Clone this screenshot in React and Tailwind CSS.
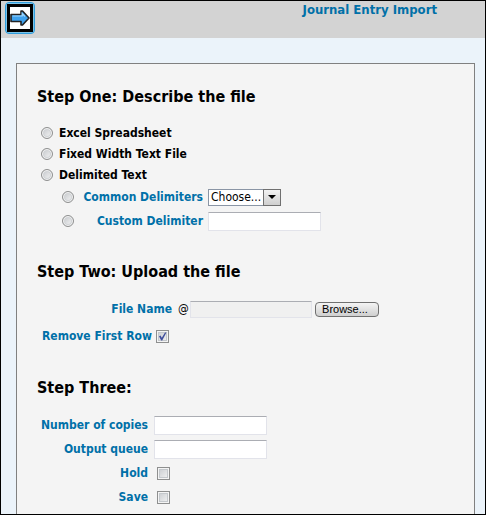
import React, { useState } from "react";

const fileTypes = [
  { value: "excel", label: "Excel Spreadsheet" },
  { value: "fixed", label: "Fixed Width Text File" },
  { value: "delimited", label: "Delimited Text" },
];

const textBox =
  "h-[19px] w-[113px] bg-white border border-[#e2e3ea] border-t-[#abadb3] px-1 text-xs text-black font-normal";

function Radio(props) {
  return (
    <input
      type="radio"
      className="appearance-none shrink-0 w-3 h-3 rounded-full border border-[#8e8f8f] bg-linear-to-br from-[#c2c5c9] to-[#f8f8f8] shadow-[inset_0_0_0_1px_#f4f4f4,inset_0_0_0_2px_#d0d3d6] checked:bg-[radial-gradient(circle,#1f4f8f_30%,#f4f4f4_45%)]"
      {...props}
    />
  );
}

function Checkbox(props) {
  return (
    <span className="relative flex shrink-0 w-[13px] h-[13px]">
      <input
        type="checkbox"
        className="peer appearance-none w-[13px] h-[13px] border border-[#8e8f8f] bg-linear-to-br from-[#c6c9cd] to-[#f6f6f6] shadow-[inset_0_0_0_1px_#f4f4f4,inset_0_0_0_2px_#c4c8cc]"
        {...props}
      />
      <svg
        viewBox="0 0 13 13"
        className="absolute inset-0 w-[13px] h-[13px] pointer-events-none invisible peer-checked:visible"
      >
        <path d="M3 6.2 L4.6 5.6 L5.8 7.8 L9 2.6 L10.4 2.6 L6.2 10.4 L5.2 10.4 Z" fill="#404f9c" />
      </svg>
    </span>
  );
}

function Heading({ children }) {
  return <h2 className="text-base leading-6 font-bold text-black mb-[13px]">{children}</h2>;
}

function Row({ id, label, children }) {
  return (
    <div className="flex items-center h-6">
      <label htmlFor={id} className="w-[111px] text-right mr-1.5">
        {label}
      </label>
      {children}
    </div>
  );
}

export default function App() {
  const [fileType, setFileType] = useState("");
  const [delimiter, setDelimiter] = useState("");
  const [removeFirst, setRemoveFirst] = useState(true);

  return (
    <div className="min-h-screen flex flex-col border border-black bg-[#ebf3fa] font-['DejaVu_Sans_Condensed','DejaVu_Sans',sans-serif] text-xs leading-4 font-bold text-[#0070a8] whitespace-nowrap">
      <header className="h-[37px] flex items-start justify-between bg-[#d3d3d3] pl-1 pt-px pr-12">
        <button
          type="button"
          aria-label="Continue"
          className="w-[30px] h-8 p-px rounded-sm border border-[#2f9ddc] bg-[#7cc4ea]"
        >
          <svg viewBox="0 0 26 28" className="w-full h-full">
            <rect x="1.5" y="1.5" width="23" height="25" fill="#fff" stroke="#000" strokeWidth="3" />
            <path
              d="M4 10.5 H14 V7 H15.5 L22 14 L15.5 21 H14 V17.5 H4 Z"
              fill="#3fa2ee"
              stroke="#222"
              strokeWidth="1.6"
              strokeLinejoin="round"
            />
            <path d="M5.5 12 H15.2 V9.5 L18 12.5" fill="none" stroke="#9fd6fb" strokeWidth="1.2" />
          </svg>
        </button>
        <h1 className="text-[13px]">Journal Entry Import</h1>
      </header>

      <main className="flex-1 mt-[25px] ml-[15px] mr-2.5 border border-b-0 border-[#808080] bg-[#f4f4f4] pl-5 pt-[21px]">
        <section className="mb-[27px]">
          <Heading>Step One: Describe the file</Heading>
          {fileTypes.map((t) => (
            <label key={t.value} className="flex items-center gap-1.5 h-[21px] pl-1 text-black">
              <Radio
                name="fileType"
                value={t.value}
                checked={fileType === t.value}
                onChange={() => setFileType(t.value)}
              />
              {t.label}
            </label>
          ))}
          <div className="flex items-center h-6 pl-[25px]">
            <Radio
              name="delimiter"
              aria-label="Use a common delimiter"
              checked={delimiter === "common"}
              onChange={() => setDelimiter("common")}
            />
            <label htmlFor="common" className="w-[129px] text-right mr-[5px]">
              Common Delimiters
            </label>
            <span className="relative flex">
              <select
                id="common"
                className="appearance-none w-[73px] h-[17px] border border-[#8a95a5] bg-white pl-0.5 text-xs leading-none text-black font-normal"
              >
                <option>Choose...</option>
                <option>Comma</option>
                <option>Tab</option>
              </select>
              <span className="absolute right-0 inset-y-0 w-[18px] flex items-center justify-center border border-[#707070] bg-linear-to-b from-[#f2f2f2] to-[#cfcfcf] pointer-events-none">
                <svg viewBox="0 0 8 4" className="w-2 h-1">
                  <path d="M0 0 H8 L4 4 Z" fill="#000" />
                </svg>
              </span>
            </span>
          </div>
          <div className="flex items-center h-6 pl-[25px]">
            <Radio
              name="delimiter"
              aria-label="Use a custom delimiter"
              checked={delimiter === "custom"}
              onChange={() => setDelimiter("custom")}
            />
            <label htmlFor="custom" className="w-[129px] text-right mr-[5px]">
              Custom Delimiter
            </label>
            <input id="custom" type="text" className={textBox} />
          </div>
        </section>

        <section className="mb-7">
          <Heading>Step Two: Upload the file</Heading>
          <div className="flex items-center h-6 mb-[3px]">
            <label htmlFor="fileName" className="w-[135px] text-right mr-1.5">
              File Name
            </label>
            <span className="w-3 text-black font-normal">@</span>
            <input
              id="fileName"
              type="text"
              readOnly
              className="h-[17px] w-[122px] mr-[3px] border border-[#e2e3ea] border-t-[#abadb3] bg-[#f0f0f0]"
            />
            <button
              type="button"
              className="h-[15px] w-16 pr-1 rounded-sm border border-[#707070] bg-linear-to-b from-[#f4f4f4] to-[#cfcfcf] font-['Liberation_Sans',sans-serif] text-[11px] leading-3 text-black font-normal"
            >
              Browse...
            </button>
          </div>
          <div className="flex items-center h-6 pl-[5px]">
            <label htmlFor="removeFirst" className="w-[111px] mr-[3px]">
              Remove First Row
            </label>
            <Checkbox
              id="removeFirst"
              checked={removeFirst}
              onChange={(e) => setRemoveFirst(e.target.checked)}
            />
          </div>
        </section>

        <section>
          <Heading>Step Three:</Heading>
          <Row id="copies" label="Number of copies">
            <input id="copies" type="text" className={textBox} />
          </Row>
          <Row id="queue" label="Output queue">
            <input id="queue" type="text" className={textBox} />
          </Row>
          <Row id="hold" label="Hold">
            <span className="pl-[3px]">
              <Checkbox id="hold" />
            </span>
          </Row>
          <Row id="save" label="Save">
            <span className="pl-[3px]">
              <Checkbox id="save" />
            </span>
          </Row>
        </section>
      </main>
    </div>
  );
}
